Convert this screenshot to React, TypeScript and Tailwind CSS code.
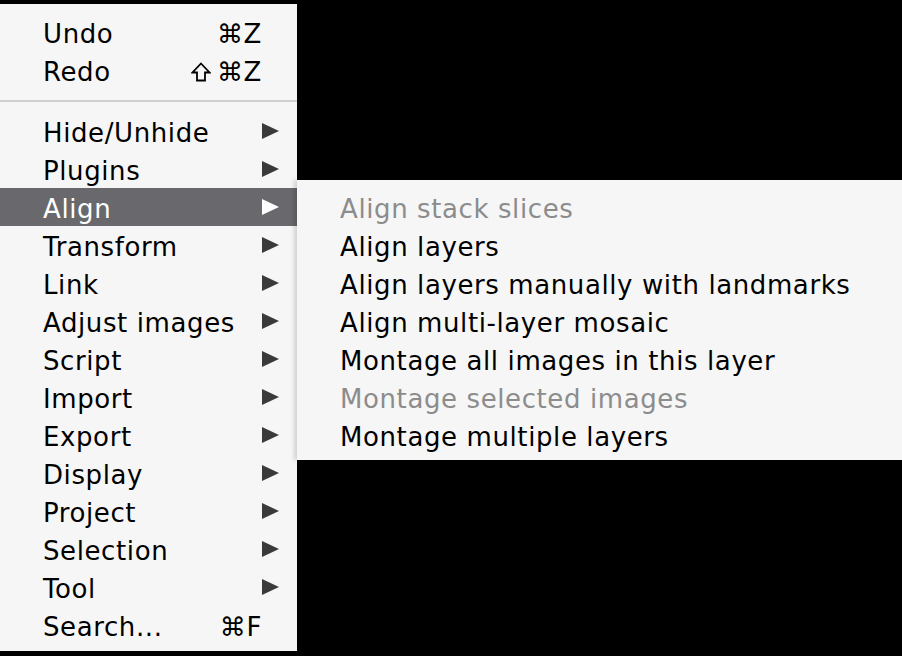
import React from "react";

type Item = { label: string; shortcut?: React.ReactNode; arrow?: boolean; active?: boolean };

function ShiftIcon() {
  return (
    <svg width="20" height="20" viewBox="0 0 20 20" className="mr-[6px] inline-block shrink-0">
      <path
        d="M10 1.5 L18.5 10.5 L14 10.5 L14 18.5 L6 18.5 L6 10.5 L1.5 10.5 Z"
        fill="none"
        stroke="#000"
        strokeWidth="1.8"
        strokeLinejoin="miter"
      />
    </svg>
  );
}

const top: Item[] = [
  { label: "Undo", shortcut: "⌘Z" },
  {
    label: "Redo",
    shortcut: (
      <span className="flex items-center">
        <ShiftIcon />
        ⌘Z
      </span>
    ),
  },
];

const main: Item[] = [
  { label: "Hide/Unhide", arrow: true },
  { label: "Plugins", arrow: true },
  { label: "Align", arrow: true, active: true },
  { label: "Transform", arrow: true },
  { label: "Link", arrow: true },
  { label: "Adjust images", arrow: true },
  { label: "Script", arrow: true },
  { label: "Import", arrow: true },
  { label: "Export", arrow: true },
  { label: "Display", arrow: true },
  { label: "Project", arrow: true },
  { label: "Selection", arrow: true },
  { label: "Tool", arrow: true },
];

const sub: { label: string; disabled?: boolean }[] = [
  { label: "Align stack slices", disabled: true },
  { label: "Align layers" },
  { label: "Align layers manually with landmarks" },
  { label: "Align multi-layer mosaic" },
  { label: "Montage all images in this layer" },
  { label: "Montage selected images", disabled: true },
  { label: "Montage multiple layers" },
];

function Arrow({ white }: { white?: boolean }) {
  return (
    <svg width="17" height="16" viewBox="0 0 17 16" className="shrink-0">
      <polygon points="0,0 17,8 0,16" fill={white ? "#ffffff" : "#3a3a3a"} />
    </svg>
  );
}

function Row({ item }: { item: Item }) {
  return (
    <div
      className={`flex h-[38px] items-center pl-[43px] pr-[18px] ${
        item.active ? "bg-[#69696d] text-white" : "text-black"
      }`}
    >
      <span className="flex-1 translate-y-[2px]">{item.label}</span>
      {item.shortcut && (
        <span className="translate-y-[2px] pr-[17px] text-right">{item.shortcut}</span>
      )}
      {item.arrow && <Arrow white={item.active} />}
    </div>
  );
}

export default function App() {
  return (
    <div
      className="relative h-[656px] w-[902px] overflow-hidden bg-black text-[26px] tracking-[0.6px]"
      style={{ fontFamily: '"DejaVu Sans", sans-serif' }}
    >
      <div className="flex items-start">
        <div className="mt-[4px] flex w-[297px] flex-col bg-[#f6f6f6] pt-[9px] pb-[7px]">
          {top.map((it) => (
            <Row key={it.label} item={it} />
          ))}
          <div className="flex h-[23px] items-center">
            <div className="h-[2px] w-full bg-[#d0d0d0]" />
          </div>
          {main.map((it) => (
            <Row key={it.label} item={it} />
          ))}
          <Row item={{ label: "Search...", shortcut: "⌘F" }} />
        </div>
        <div className="mt-[180px] flex flex-1 flex-col bg-[#f6f6f6] pt-[9px] pb-[5px] shadow-[-3px_0_4px_rgba(0,0,0,0.15)]">
          {sub.map((s) => (
            <div
              key={s.label}
              className={`flex h-[38px] items-center pl-[43px] ${
                s.disabled ? "text-[#8c8c8c]" : "text-black"
              }`}
            >
              <span className="translate-y-[1px]">{s.label}</span>
            </div>
          ))}
        </div>
      </div>
    </div>
  );
}
